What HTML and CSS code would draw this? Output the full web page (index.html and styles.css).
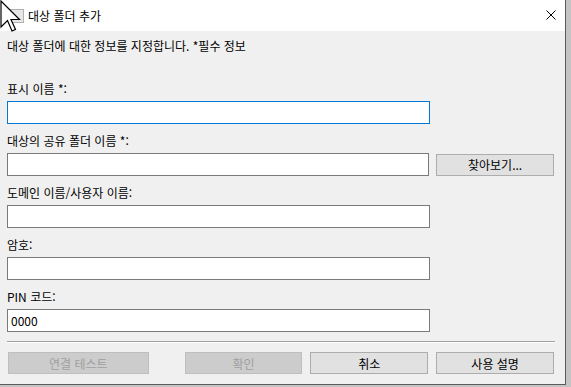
FILE: index.html
```html
<!DOCTYPE html>
<html lang="ko">
<head>
    <meta charset="UTF-8">
    <meta name="viewport" content="width=device-width, initial-scale=1.0">
    <title>대상 폴더 추가</title>
    <link rel="stylesheet" href="styles.css">
</head>
<body>
    <div class="desktop">
        <div class="dialog">
            <!-- Title bar -->
            <div class="titlebar">
                <span class="app-icon"></span>
                <span class="title">대상 폴더 추가</span>
                <span class="close">
                    <svg width="10" height="10" viewBox="0 0 10 10">
                        <path d="M0.5 0.5 L9.5 9.5 M9.5 0.5 L0.5 9.5" stroke="#000" stroke-width="1" fill="none"/>
                    </svg>
                </span>
            </div>

            <div class="content">
                <p class="intro">대상 폴더에 대한 정보를 지정합니다. *필수 정보</p>

                <div class="field">
                    <label for="displayName">표시 이름 *:</label>
                    <input type="text" id="displayName" class="focused">
                </div>

                <div class="field">
                    <label for="shareName">대상의 공유 폴더 이름 *:</label>
                    <div class="row">
                        <input type="text" id="shareName">
                        <button class="btn browse">찾아보기...</button>
                    </div>
                </div>

                <div class="field">
                    <label for="userName">도메인 이름/사용자 이름:</label>
                    <input type="text" id="userName">
                </div>

                <div class="field">
                    <label for="password">암호:</label>
                    <input type="password" id="password">
                </div>

                <div class="field">
                    <label for="pin">PIN 코드:</label>
                    <input type="text" id="pin" value="0000">
                </div>

                <div class="separator"></div>

                <div class="buttons">
                    <button class="btn wide" disabled>연결 테스트</button>
                    <button class="btn ok" disabled>확인</button>
                    <button class="btn">취소</button>
                    <button class="btn">사용 설명</button>
                </div>
            </div>
        </div>
    </div>

    <!-- mouse pointer over the title bar -->
    <svg class="cursor" width="22" height="34" viewBox="0 0 22 34">
        <path d="M1 1 L1 27 L7.5 20.5 L12 31 L15.5 29.5 L11 19.5 L19.5 19.5 Z" fill="#fff" stroke="#000" stroke-width="1.2" stroke-linejoin="miter"/>
    </svg>
</body>
</html>
```

FILE: styles.css
```css
body {
    margin: 0;
    font-family: "Noto Sans CJK KR", "Noto Sans", sans-serif;
    font-size: 12px;
    color: #000;
}

.desktop {
    width: 571px;
    height: 387px;
    background-color: #c4c4c4;
    overflow: hidden;
}

.dialog {
    width: 566px;
    height: 385px;
    box-sizing: border-box;
    background-color: #f0f0f0;
    border-right: 1px solid #5a5a5a;
    border-bottom: 1px solid #5a5a5a;
}

/* Title bar */
.titlebar {
    height: 31px;
    background-color: #fff;
    display: flex;
    align-items: center;
    position: relative;
}

.app-icon {
    width: 12px;
    height: 12px;
    margin-left: 10px;
    border: 1px solid #b0b0b0;
    background-color: #e8e8e8;
}

.title {
    margin-left: 4px;
    font-size: 12px;
    line-height: 16px;
}

.close {
    position: absolute;
    left: 546px;
    top: 10px;
    width: 10px;
    height: 10px;
    display: flex;
}

/* Content */
.content {
    padding: 0 11px 0 7px;
}

.intro {
    margin: 7px 0 27px 0;
    line-height: 16px;
}

.field {
    margin-bottom: 9px;
}

.field label {
    display: block;
    line-height: 16px;
    margin-bottom: 4px;
}

.field input {
    display: block;
    width: 423px;
    height: 23px;
    box-sizing: border-box;
    margin: 0;
    padding: 0 3px;
    border: 1px solid #7a7a7a;
    background-color: #fff;
    font-family: "Noto Sans CJK KR", "Noto Sans", sans-serif;
    font-size: 12px;
    outline: none;
}

.field input.focused {
    border-color: #0078d7;
}

.row {
    display: flex;
    align-items: center;
    gap: 7px;
}

.btn {
    width: 118px;
    height: 22px;
    box-sizing: border-box;
    margin: 0;
    padding: 0;
    border: 1px solid #adadad;
    background-color: #e1e1e1;
    font-family: "Noto Sans CJK KR", "Noto Sans", sans-serif;
    font-size: 12px;
    color: #000;
}

.btn:disabled {
    background-color: #cccccc;
    border-color: #bfbfbf;
    color: #a0a0a0;
}

.separator {
    height: 1px;
    width: 548px;
    background-color: #a0a0a0;
    border-bottom: 1px solid #fff;
    margin-bottom: 9px;
}

.buttons {
    display: flex;
    gap: 8px;
    margin-left: 1px;
}

.btn.wide {
    width: 141px;
    margin-right: 28px;
}

.cursor {
    position: absolute;
    left: 0;
    top: 0;
}
```
